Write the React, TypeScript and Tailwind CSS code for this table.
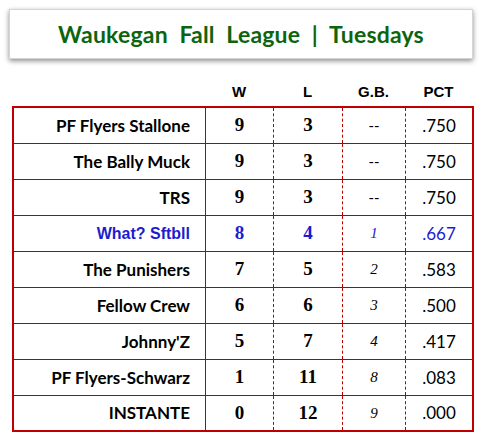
const ROWS = [
  { team: 'PF Flyers Stallone', w: '9', l: '3', gb: '--', pct: '.750' },
  { team: 'The Bally Muck', w: '9', l: '3', gb: '--', pct: '.750' },
  { team: 'TRS', w: '9', l: '3', gb: '--', pct: '.750' },
  { team: 'What? Sftbll', w: '8', l: '4', gb: '1', pct: '.667', us: true },
  { team: 'The Punishers', w: '7', l: '5', gb: '2', pct: '.583' },
  { team: 'Fellow Crew', w: '6', l: '6', gb: '3', pct: '.500' },
  { team: "Johnny'Z", w: '5', l: '7', gb: '4', pct: '.417' },
  { team: 'PF Flyers-Schwarz', w: '1', l: '11', gb: '8', pct: '.083' },
  { team: 'INSTANTE', w: '0', l: '12', gb: '9', pct: '.000' },
];

const COLS = 'grid grid-cols-[191px_68px_69px_63px_67px]';

export default function App() {
  return (
    <div className="w-[483px] h-[436px] bg-white overflow-hidden pt-[9px]">
      <div className="mx-[9px] w-[464px] h-[50px] bg-white border border-[#d4d4d4] shadow-[0_2px_5px_rgba(0,0,0,0.45)] flex items-center justify-center">
        <h1 className="whitespace-pre font-['Lato',sans-serif] font-bold text-[23px] text-[#0c650e] tracking-[0.2px]">
          {'Waukegan  Fall  League  |  Tuesdays'}
        </h1>
      </div>

      <div className="mt-[20px] ml-[12px] w-[462px]">
        <div className={`${COLS} h-[27px] items-end pb-[7px] px-[2px] font-['Liberation_Sans',Arial,sans-serif] font-bold text-[15px] text-black leading-none`}>
          <span />
          <span className="text-center">W</span>
          <span className="text-center">L</span>
          <span className="text-center">G.B.</span>
          <span className="text-center">PCT</span>
        </div>

        <div className="border-2 border-[#c00000]">
          {ROWS.map((r, i) => (
            <div
              key={r.team}
              className={`${COLS} ${i < ROWS.length - 1 ? 'h-[36px] border-b border-[#b80000]' : 'h-[34px]'} ${i === 0 ? 'h-[35px]' : ''} items-center ${r.us ? 'text-[#1c1ccf]' : 'text-black'}`}
            >
              <span
                className={`text-right pr-[15px] font-bold ${r.us ? "font-['Liberation_Sans',Arial,sans-serif] text-[16px]" : "font-['Lato',sans-serif] text-[17px]"}`}
              >
                {r.team}
              </span>
              <span className="h-full flex items-center justify-center border-l border-[#b80000] font-['Liberation_Serif',serif] font-bold text-[19px]">
                {r.w}
              </span>
              <span className="h-full flex items-center justify-center border-l border-dashed border-[#b80000] font-['Liberation_Serif',serif] font-bold text-[19px]">
                {r.l}
              </span>
              <span
                className={`h-full flex items-center justify-center border-l border-dashed border-[#b80000] text-[15px] ${r.gb === '--' ? "font-['Lato',sans-serif]" : "font-['Liberation_Serif',serif] italic"}`}
              >
                {r.gb}
              </span>
              <span className="h-full flex items-center justify-center border-l border-dashed border-[#b80000] font-['Lato',sans-serif] text-[17px]">
                {r.pct}
              </span>
            </div>
          ))}
        </div>
      </div>
    </div>
  );
}
